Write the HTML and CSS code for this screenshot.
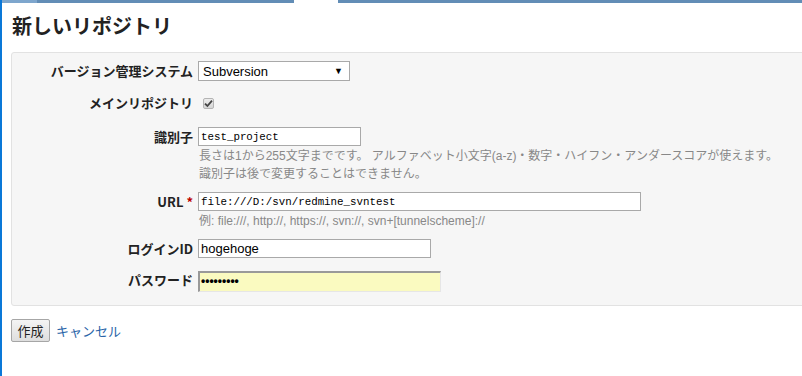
FILE: index.html
```html
<!DOCTYPE html>
<html lang="ja">
<head>
  <meta charset="UTF-8" />
  <title>新しいリポジトリ</title>
  <link rel="stylesheet" href="styles.css">
</head>
<body>
  <div class="topbar">
    <span class="seg seg-light"></span>
    <span class="seg seg-main"></span>
    <span class="seg seg-gap"></span>
    <span class="seg seg-rest"></span>
  </div>

  <div class="content">
    <h2>新しいリポジトリ</h2>

    <form class="box tabular">
      <div class="row row-scm">
        <label class="lbl">バージョン管理システム</label>
        <div class="field">
          <div class="select">
            <span>Subversion</span>
            <span class="arrow">▼</span>
          </div>
        </div>
      </div>

      <div class="row row-main">
        <label class="lbl">メインリポジトリ</label>
        <div class="field">
          <span class="checkbox">
            <svg width="9" height="9" viewBox="0 0 9 9"><path d="M1 4.6 L3.4 7 L8 1.6" fill="none" stroke="#444" stroke-width="1.8"/></svg>
          </span>
        </div>
      </div>

      <div class="row row-ident">
        <label class="lbl">識別子</label>
        <div class="field">
          <input class="text mono w-ident" type="text" value="test_project">
          <em class="info">長さは1から255文字までです。 アルファベット小文字(a-z)・数字・ハイフン・アンダースコアが使えます。<br>識別子は後で変更することはできません。</em>
        </div>
      </div>

      <div class="row row-url">
        <label class="lbl">URL <span class="required">*</span></label>
        <div class="field">
          <input class="text mono w-url" type="text" value="file:///D:/svn/redmine_svntest">
          <em class="info">例: file:///, http://, https://, svn://, svn+[tunnelscheme]://</em>
        </div>
      </div>

      <div class="row row-login">
        <label class="lbl">ログインID</label>
        <div class="field">
          <input class="text w-login" type="text" value="hogehoge">
        </div>
      </div>

      <div class="row row-pass">
        <label class="lbl">パスワード</label>
        <div class="field">
          <div class="password">•••••••••</div>
        </div>
      </div>
    </form>

    <div class="actions">
      <button type="button" class="btn">作成</button>
      <a href="#" class="cancel">キャンセル</a>
    </div>
  </div>
</body>
</html>
```

FILE: styles.css
```css
html, body {
  overflow: hidden;
}

body {
  margin: 0;
  padding: 0;
  font-family: "Liberation Sans", "Noto Sans CJK JP", sans-serif;
  font-size: 12px;
  color: #222;
  background: #fff;
  border-left: 2px solid #0a78d8;
  min-height: 376px;
}

/* barra superior */
.topbar {
  display: flex;
  height: 3px;
  margin-left: -2px;
}

.seg { display: block; height: 3px; }
.seg-light { width: 37px; background: #7ea6cd; }
.seg-main { width: 257px; background: #628db6; }
.seg-gap { width: 44px; background: #fff; }
.seg-rest { flex: 1; background: #628db6; }

.content {
  padding: 0 0 0 9px;
}

h2 {
  margin: 0;
  padding: 8px 0 0 1px;
  height: 49px;
  box-sizing: border-box;
  font-family: "Noto Sans CJK JP", sans-serif;
  font-size: 20px;
  line-height: 30px;
  font-weight: bold;
  color: #222;
}

.box {
  display: block;
  background: #f6f6f6;
  border: 1px solid #e2e2e2;
  border-radius: 3px;
  margin-right: -12px;
  padding: 8px 0 13px 0;
}

.row {
  display: flex;
  align-items: flex-start;
}

.lbl {
  width: 181px;
  margin-right: 5px;
  flex-shrink: 0;
  text-align: right;
  font-family: "Noto Sans CJK JP", sans-serif;
  font-weight: bold;
  font-size: 13px;
  line-height: 19px;
  color: #222;
}

.field {
  display: flex;
  flex-direction: column;
  align-items: flex-start;
}

.row-main { margin-top: 12px; }
.row-ident { margin-top: 14px; }
.row-url { margin-top: 9px; }
.row-login { margin-top: 9px; }
.row-pass { margin-top: 13px; }

.row-main .lbl { line-height: 20px; }
.row-pass .lbl { line-height: 17px; }

.select {
  box-sizing: border-box;
  width: 152px;
  height: 20px;
  border: 1px solid #a9a9a9;
  background: #fff;
  display: flex;
  justify-content: space-between;
  align-items: center;
  padding: 0 6px 0 4px;
  font-family: "Liberation Sans", sans-serif;
  font-size: 13px;
  color: #000;
}

.select .arrow {
  font-size: 9px;
}

.checkbox {
  box-sizing: border-box;
  width: 11px;
  height: 11px;
  margin: 5px 0 0 5px;
  border: 1px solid #b4b4b4;
  border-radius: 2px;
  background: linear-gradient(#ececec, #d6d6d6);
  display: flex;
  align-items: center;
  justify-content: center;
}

.text {
  box-sizing: border-box;
  height: 19px;
  margin: 0;
  padding: 0 2px;
  border: 1px solid #a9a9a9;
  background: #fff;
  font-family: "Liberation Sans", sans-serif;
  font-size: 13px;
  color: #000;
  outline: none;
}

.mono {
  font-family: "Liberation Mono", monospace;
  font-size: 10.8px;
}

.w-ident { width: 163px; }
.w-url { width: 443px; }
.w-login { width: 233px; }

.info {
  font-style: normal;
  font-family: "Liberation Sans", "Noto Sans CJK JP", sans-serif;
  font-size: 12px;
  line-height: 18px;
  color: #888;
  padding-left: 1px;
  margin-top: 1px;
}

.required {
  color: #bb0000;
}

.password {
  box-sizing: border-box;
  width: 243px;
  height: 21px;
  border-style: solid;
  border-width: 2px 1px 1px 2px;
  border-color: #999 #e6e6e6 #e6e6e6 #999;
  background: #fafac0;
  font-family: "Liberation Sans", sans-serif;
  font-size: 12px;
  font-weight: bold;
  line-height: 17px;
  padding-left: 1px;
  color: #000;
}

.actions {
  display: flex;
  align-items: center;
  margin-top: 13px;
  gap: 6px;
}

.btn {
  box-sizing: border-box;
  width: 39px;
  height: 23px;
  margin: 0;
  padding: 0;
  border: 1px solid #a6a6a6;
  border-radius: 2px;
  background: linear-gradient(#f4f4f4, #dedede);
  font-family: "Noto Sans CJK JP", sans-serif;
  font-size: 13px;
  color: #222;
}

.cancel {
  color: #2a64a8;
  text-decoration: none;
  font-family: "Noto Sans CJK JP", sans-serif;
  font-size: 13px;
}
```
